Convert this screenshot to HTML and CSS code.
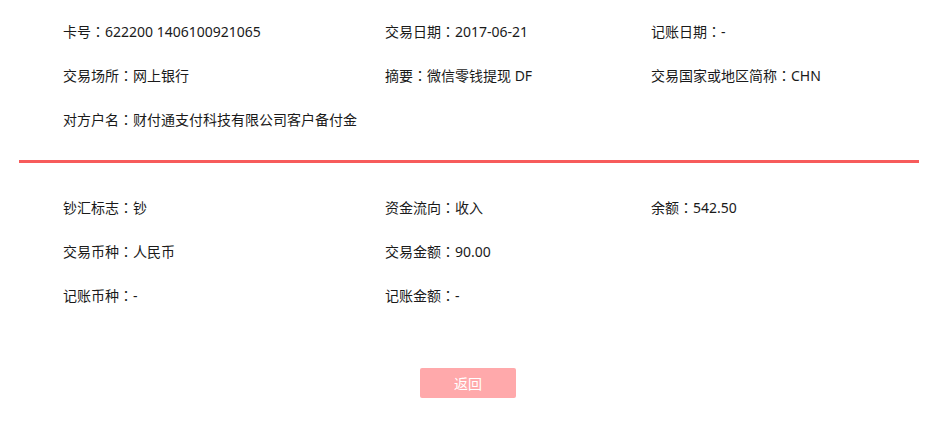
FILE: index.html
```html
<!DOCTYPE html>
<html>
<head>
<meta charset="utf-8">
<link rel="stylesheet" href="styles.css">
</head>
<body>
<div class="wrap">
  <div class="grid top">
    <div class="item">卡号<span class="c">：</span>622200 1406100921065</div>
    <div class="item">交易日期<span class="c">：</span>2017-06-21</div>
    <div class="item">记账日期<span class="c">：</span>-</div>
    <div class="item">交易场所<span class="c">：</span>网上银行</div>
    <div class="item">摘要<span class="c">：</span>微信零钱提现 DF</div>
    <div class="item">交易国家或地区简称<span class="c">：</span>CHN</div>
    <div class="item">对方户名<span class="c">：</span>财付通支付科技有限公司客户备付金</div>
  </div>
  <div class="divider"></div>
  <div class="grid bottom">
    <div class="item">钞汇标志<span class="c">：</span>钞</div>
    <div class="item">资金流向<span class="c">：</span>收入</div>
    <div class="item">余额<span class="c">：</span>542.50</div>
    <div class="item">交易币种<span class="c">：</span>人民币</div>
    <div class="item">交易金额<span class="c">：</span>90.00</div>
    <div class="item"></div>
    <div class="item">记账币种<span class="c">：</span>-</div>
    <div class="item">记账金额<span class="c">：</span>-</div>
  </div>
  <div class="actions">
    <button class="btn-back">返回</button>
  </div>
</div>
</body>
</html>
```
FILE: styles.css
```css
html, body {
  margin: 0;
  padding: 0;
  background: #fff;
}
body {
  font-family: "Noto Sans", "Noto Sans CJK SC", sans-serif;
  font-size: 14px;
  color: #1a1a1a;
}
.wrap {
  width: 900px;
  margin-left: 19px;
}
.grid {
  display: grid;
  grid-template-columns: 322px 266px 1fr;
  padding-left: 44px;
}
.top {
  padding-top: 9px;
}
.item {
  height: 44px;
  line-height: 44px;
  white-space: nowrap;
}
.c {
  font-family: "Noto Sans CJK TC", "Noto Sans CJK SC", sans-serif;
  font-feature-settings: "locl" 0;
}
.divider {
  height: 3px;
  background: #f75b5b;
  margin-top: 19px;
}
.bottom {
  padding-top: 22px;
}
.actions {
  display: flex;
  justify-content: center;
  margin-top: 51px;
  margin-left: -19px;
  width: 936px;
}
.btn-back {
  width: 96px;
  height: 30px;
  border: none;
  border-radius: 2px;
  background: #ffa9ab;
  color: #fff;
  font-family: "Noto Sans CJK SC", sans-serif;
  font-size: 14px;
  padding: 0;
}
```
